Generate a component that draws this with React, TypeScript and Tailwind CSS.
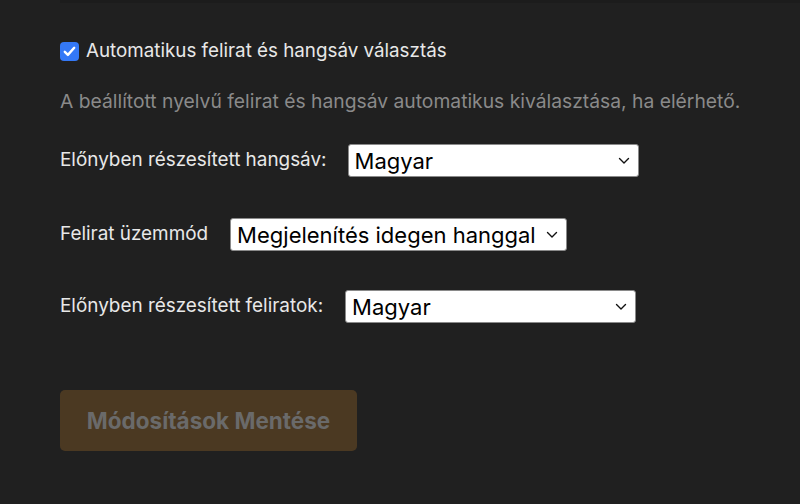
import { FC } from 'react';

const Chevron: FC = () => (
    <svg width="12" height="8" viewBox="0 0 12 8" fill="none" className="shrink-0">
        <path d="M1.5 1.5 L6 6 L10.5 1.5" stroke="#111" strokeWidth="1.4" strokeLinecap="round" strokeLinejoin="round" />
    </svg>
);

const FakeSelect: FC<{ value: string; width: string }> = ({ value, width }) => (
    <div className={`${width} h-[33px] flex items-center justify-between bg-white border border-[#8a8a8a] rounded-[3px] pl-[6px] pr-[8px]`}>
        <span className="text-[22px] leading-none text-black">{value}</span>
        <Chevron />
    </div>
);

const App: FC = () => {
    return (
        <div className="w-[800px] h-[504px] bg-[#202020] overflow-hidden font-['Inter',sans-serif]">
            <div className="h-[3px] ml-[60px] bg-[#1c1c1c]"></div>
            <div className="pl-[60px] pt-[38px]">
                {/* Auto select */}
                <label className="flex items-center gap-[7px] h-[20px]">
                    <span className="w-[19px] h-[19px] rounded-[4px] bg-[#3478f6] flex items-center justify-center">
                        <svg width="13" height="11" viewBox="0 0 13 11" fill="none">
                            <path d="M1.8 5.8 L4.9 8.9 L11.2 1.8" stroke="white" strokeWidth="2.4" strokeLinecap="round" strokeLinejoin="round" />
                        </svg>
                    </span>
                    <span className="text-[18.8px] leading-none text-[#e8e8e8]">Automatikus felirat és hangsáv választás</span>
                </label>

                <p className="mt-[31px] text-[19.3px] text-[#8a8a8a] leading-none">
                    A beállított nyelvű felirat és hangsáv automatikus kiválasztása, ha elérhető.
                </p>

                <div className="mt-[33px] h-[33px] flex items-center gap-[21px]">
                    <span className="text-[18.9px] leading-none text-[#e8e8e8]">Előnyben részesített hangsáv:</span>
                    <FakeSelect value="Magyar" width="w-[291px]" />
                </div>

                <div className="mt-[41px] h-[33px] flex items-center gap-[22px]">
                    <span className="text-[18.9px] leading-none text-[#e8e8e8]">Felirat üzemmód</span>
                    <FakeSelect value="Megjelenítés idegen hanggal" width="w-[337px]" />
                </div>

                <div className="mt-[39px] h-[33px] flex items-center gap-[22px]">
                    <span className="text-[18.9px] leading-none text-[#e8e8e8]">Előnyben részesített feliratok:</span>
                    <FakeSelect value="Magyar" width="w-[291px]" />
                </div>

                <button className="mt-[67px] w-[297px] h-[61px] rounded-[5px] bg-[#4b3922] text-[#6a6a6a] text-[22.5px] font-bold">
                    Módosítások Mentése
                </button>
            </div>
        </div>
    );
};

export default App;
